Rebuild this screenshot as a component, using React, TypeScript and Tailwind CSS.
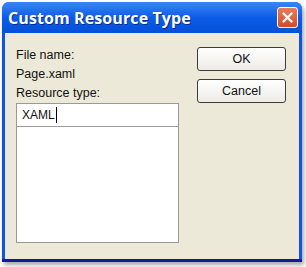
import React from "react";

export default function App() {
  return (
    <div className="w-[306px] h-[267px] bg-white pt-[2px] pl-[2px]" style={{ fontFamily: '"Liberation Sans", Arial, sans-serif' }}>
      <div className="w-[300px] h-[260px] rounded-t-[7px] bg-[#0a56e2] flex flex-col shadow-[2px_3px_4px_rgba(0,0,0,0.35)] border-b-[3px] border-[#0a1f9a]">
        <div className="h-[31px] flex items-center justify-between pl-[6px] pr-[4px] rounded-t-[7px] bg-gradient-to-b from-[#3a86f5] via-[#0a5ce8] to-[#0650d8]">
          <span className="text-white font-bold text-[16px] tracking-[0.1px] [text-shadow:1px_1px_0_#0a2a8a]" style={{ fontFamily: '"Open Sans", "Liberation Sans", sans-serif' }}>
            Custom Resource Type
          </span>
          <div className="w-[21px] h-[21px] rounded-[3px] border border-white bg-gradient-to-b from-[#e87c5c] to-[#d24a22] flex items-center justify-center">
            <svg width="13" height="13" viewBox="0 0 13 13">
              <path d="M2.5 2.5 L10.5 10.5 M10.5 2.5 L2.5 10.5" stroke="white" strokeWidth="2.4" strokeLinecap="round" />
            </svg>
          </div>
        </div>
        <div className="flex-1 mx-[3px] bg-[#ece9d8] flex pl-[11px] pt-[13px]">
          <div className="w-[163px] flex flex-col text-[12.5px] text-[#111]">
            <div className="h-[18px] leading-[18px]">File name:</div>
            <div className="h-[18px] leading-[18px] mt-[1px]">Page.xaml</div>
            <div className="h-[18px] leading-[18px] mt-[1px]">Resource type:</div>
            <div className="mt-[1px] h-[24px] bg-white border border-[#9a9a94] flex items-center pl-[5px] text-[12px]">
              XAML<span className="w-px h-[16px] bg-black ml-[1px]" />
            </div>
            <div className="h-[116px] bg-white border border-t-0 border-[#9a9a94]" />
          </div>
          <div className="ml-[18px] mt-[1px] flex flex-col gap-[8px] w-[89px]">
            <div className="h-[24px] rounded-[3px] border border-[#3c3c3c] bg-gradient-to-b from-white to-[#ecebe6] flex items-center justify-center text-[12.5px] text-[#111]">OK</div>
            <div className="h-[24px] rounded-[3px] border border-[#3c3c3c] bg-gradient-to-b from-white to-[#ecebe6] flex items-center justify-center text-[12.5px] text-[#111]">Cancel</div>
          </div>
        </div>
      </div>
    </div>
  );
}
